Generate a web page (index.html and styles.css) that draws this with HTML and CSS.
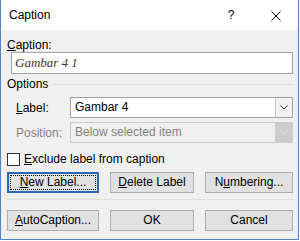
FILE: index.html
```html
<!DOCTYPE html>
<html lang="en">
<head>
	<meta charset="UTF-8">
	<title>Caption</title>
	<link rel="stylesheet" href="styles.css">
</head>
<body>
	<div class="dialog">
		<div class="titlebar">
			<span class="title">Caption</span>
			<span class="help">?</span>
			<span class="close">
				<svg width="10" height="10" viewBox="0 0 10 10"><path d="M0.5 0.5L9.5 9.5M9.5 0.5L0.5 9.5" stroke="#000" stroke-width="1" fill="none"/></svg>
			</span>
		</div>
		<div class="content">
			<div class="field-label"><u>C</u>aption:</div>
			<div class="textbox">Gambar 4 1</div>
			<div class="group-title"><span>Options</span><span class="group-line"></span></div>
			<div class="options">
				<span class="opt-label"><u>L</u>abel:</span>
				<div class="combo">
					<span class="combo-text">Gambar 4</span>
					<span class="combo-btn">
						<svg width="8" height="5" viewBox="0 0 8 5"><path d="M0.5 0.5L4 4L7.5 0.5" stroke="#333" fill="none"/></svg>
					</span>
				</div>
				<span class="opt-label disabled">Position:</span>
				<div class="combo disabled">
					<span class="combo-text">Below selected item</span>
					<span class="combo-btn">
						<svg width="8" height="5" viewBox="0 0 8 5"><path d="M0.5 0.5L4 4L7.5 0.5" stroke="#e6e6e6" fill="none"/></svg>
					</span>
				</div>
			</div>
			<div class="check">
				<span class="box"></span>
				<span><u>E</u>xclude label from caption</span>
			</div>
			<div class="btn-row first">
				<span class="btn w-new focused"><u>N</u>ew Label...</span>
				<span class="btn w-del"><u>D</u>elete Label</span>
				<span class="btn w-num">N<u>u</u>mbering...</span>
			</div>
			<div class="sep"></div>
			<div class="btn-row">
				<span class="btn w-new"><u>A</u>utoCaption...</span>
				<span class="btn w-del">OK</span>
				<span class="btn w-num">Cancel</span>
			</div>
		</div>
	</div>
</body>
</html>
```

FILE: styles.css
```css
*{margin: 0;padding: 0;box-sizing: border-box;}
body{
	background: #fff;
	font-family: "Liberation Sans", Arial, sans-serif;
	font-size: 12px;
	color: #000;
}
.dialog{
	width: 299px;
	height: 240px;
	border: 1px solid #5283c4;
	border-top: none;
	background: #f0f0f0;
}
.titlebar{
	display: flex;
	height: 30px;
	line-height: 30px;
	background: #fff;
}
.title{
	flex: 1;
	padding-left: 8px;
}
.help{
	width: 46px;
	text-align: center;
}
.close{
	width: 44px;
	display: flex;
	align-items: center;
	justify-content: center;
	padding-top: 1px;
}
.close svg{display: block;}
.content{
	padding: 9px 5px 0 6px;
}
u{
	text-decoration-thickness: 1px;
	text-underline-offset: 1px;
}
.field-label{
	line-height: 13px;
}
.textbox{
	height: 22px;
	margin-left: 4px;
	border: 1px solid #a3a3a3;
	background: #fff;
	padding-left: 3px;
	font-family: "Liberation Serif", "Times New Roman", serif;
	font-style: italic;
	font-size: 13px;
	line-height: 20px;
	color: #3a3a3a;
}
.group-title{
	display: flex;
	align-items: center;
	margin-top: 3px;
	line-height: 14px;
}
.group-line{
	flex: 1;
	height: 1px;
	margin: 1px 0 0 6px;
	background: #dcdcdc;
}
.options{
	display: grid;
	grid-template-columns: 54px 1fr;
	grid-auto-rows: 21px;
	row-gap: 4px;
	align-items: center;
	margin-top: 6px;
	padding-left: 9px;
}
.opt-label.disabled{color: #838383;}
.combo{
	display: flex;
	height: 21px;
	border: 1px solid #a3a3a3;
	background: #fff;
}
.combo-text{
	flex: 1;
	padding-left: 4px;
	line-height: 19px;
}
.combo-btn{
	width: 17px;
	display: flex;
	align-items: center;
	justify-content: center;
	border-left: 1px solid #c8c8c8;
	background: #f2f2f2;
}
.combo-btn svg{display: block;}
.combo.disabled{
	border-color: #cccccc;
	background: #f0f0f0;
	color: #838383;
}
.combo.disabled .combo-btn{
	border-left: none;
	background: #cccccc;
}
.check{
	display: flex;
	align-items: center;
	gap: 4px;
	margin-top: 10px;
	line-height: 13px;
}
.check .box{
	width: 13px;
	height: 13px;
	border: 1px solid #333;
	background: #fff;
}
.btn-row{
	display: flex;
	justify-content: space-between;
	margin-top: 10px;
}
.btn-row.first{margin-top: 6px;}
.btn{
	display: block;
	height: 21px;
	line-height: 19px;
	text-align: center;
	border: 1px solid #adadad;
	background: #e1e1e1;
}
.btn.focused{
	border: 2px solid #2a6ab7;
	line-height: 17px;
	outline: 1px dotted #000;
	outline-offset: -4px;
}
.w-new{width: 92px;}
.w-del{width: 84px;}
.w-num{width: 88px;}
.sep{
	height: 1px;
	margin-top: 6px;
	background: #dcdcdc;
}
```
